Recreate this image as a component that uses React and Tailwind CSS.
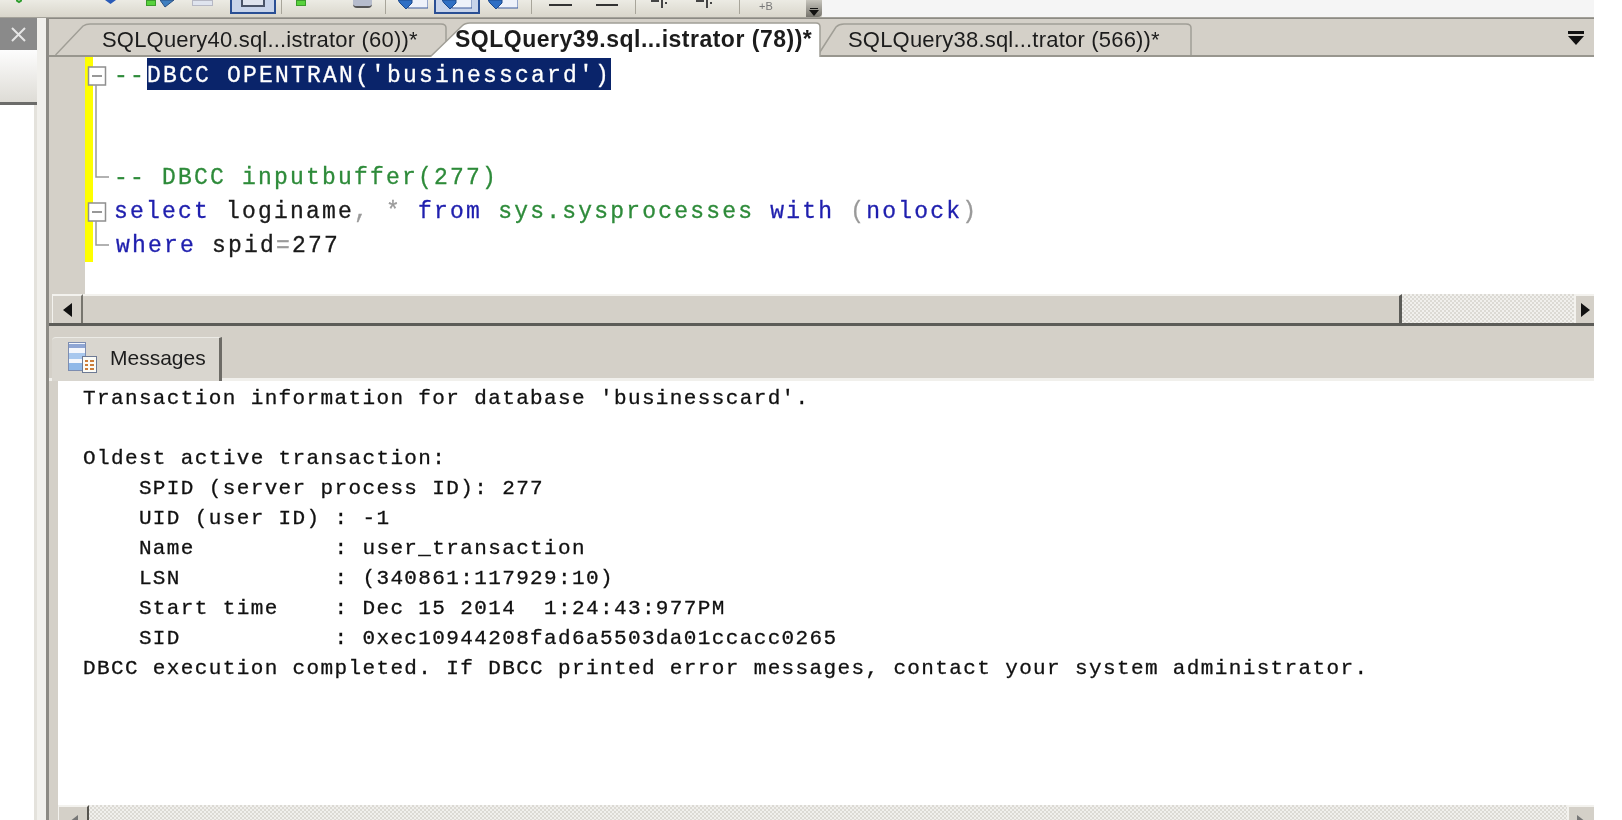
function Sep({ className }) {
  return <div className={"h-[14px] w-px bg-[#a8a59a] " + className} />;
}

function BlueArrow({ className }) {
  return (
    <svg className={className} width="30" height="14" viewBox="0 0 30 14">
      <rect x="10" y="-2" width="20" height="10" fill="#eef2fa" stroke="#3a5a9c" />
      <path d="M0 0 H14 V3 L8 9 L2 3 Z" fill="#2f6fc4" stroke="#1d4a8c" />
    </svg>
  );
}

function Tiny({ className }) {
  return (
    <svg className={className} width="17" height="10" viewBox="0 0 17 10">
      <path d="M0 1 H8 M11 0 V8 M14 3 H16" stroke="#444" strokeWidth="2" fill="none" />
    </svg>
  );
}

function Toolbar() {
  return (
    <div className="flex h-[17px] overflow-hidden">
      <div className="flex w-[822px] shrink-0 items-start bg-gradient-to-b from-[#ecebe4] to-[#d9d6cb] pl-[16px]">
        <svg width="6" height="4" viewBox="0 0 6 4">
          <path d="M0 0 L3 2 L6 0" stroke="#2f9e2f" strokeWidth="2" fill="none" />
        </svg>
        <svg className="ml-[83px]" width="11" height="5" viewBox="0 0 11 5">
          <path d="M0 0 H11 L5.5 4 Z" fill="#2a5bb8" />
        </svg>
        <div className="ml-[30px] h-[6px] w-[10px] border border-[#3c9a2c] bg-[#58d23c]" />
        <svg className="ml-[4px]" width="15" height="8" viewBox="0 0 15 8">
          <path d="M0 0 L5 7 L14 0 Z" fill="#3f7fc0" stroke="#2b4f80" />
        </svg>
        <div className="ml-[17px] h-[6px] w-[21px] border border-[#b6b8c4] bg-[#dfe4ee]" />
        <div className="ml-[17px] flex h-[14px] w-[46px] items-start justify-center border-2 border-t-0 border-[#2a4f94] bg-[#c8d4ea]">
          <div className="h-[7px] w-[24px] border-2 border-t-0 border-[#4a5468] bg-[#dfe4ee]" />
        </div>
        <Sep className="ml-[5px]" />
        <div className="ml-[14px] h-[6px] w-[10px] border border-[#3c9a2c] bg-[#58d23c]" />
        <div className="ml-[47px] h-[8px] w-[19px] rounded-b-sm border-b-2 border-[#555] bg-[#b6bccc]" />
        <Sep className="ml-[13px]" />
        <BlueArrow className="ml-[12px]" />
        <div className="ml-[6px] flex h-[14px] w-[46px] items-start justify-center border-2 border-t-0 border-[#2a4f94] bg-[#c8d4ea]">
          <BlueArrow />
        </div>
        <BlueArrow className="ml-[8px]" />
        <Sep className="ml-[13px]" />
        <div className="ml-[17px] mt-[4px] h-[2px] w-[23px] bg-[#333]" />
        <div className="ml-[24px] mt-[4px] h-[2px] w-[22px] bg-[#333]" />
        <Sep className="ml-[17px]" />
        <Tiny className="ml-[15px]" />
        <Tiny className="ml-[28px]" />
        <Sep className="ml-[26px]" />
        <span className="ml-[19px] font-['Liberation_Sans',sans-serif] text-[11px] leading-[12px] text-[#777]">+B</span>
        <div className="ml-auto flex h-full w-[16px] flex-col items-center justify-end rounded-br-sm bg-gradient-to-b from-[#c8c6be] to-[#77756e] pb-[1px]">
          <div className="mb-[1px] h-px w-[8px] bg-[#111]" />
          <svg width="10" height="6" viewBox="0 0 10 6">
            <path d="M0 0 H10 L5 6 Z" fill="#111" />
          </svg>
        </div>
      </div>
      <div className="h-full w-[772px] bg-[#f5f5f5]" />
    </div>
  );
}

function Sidebar() {
  return (
    <div className="flex w-[46px] shrink-0">
      <div className="flex w-[37px] flex-col">
        <div className="flex h-[32px] items-center justify-center bg-[#8a8a8a]">
          <svg width="17" height="17" viewBox="0 0 17 17">
            <path d="M2 2 L15 15 M15 2 L2 15" stroke="#e6e6e6" strokeWidth="2" />
          </svg>
        </div>
        <div className="h-[55px] border-b-[3px] border-[#6c6c6a] bg-gradient-to-b from-[#fdfdfd] to-[#dedcd6]" />
        <div className="flex-1 border-r-[3px] border-[#e4e2dc] bg-white" />
      </div>
      <div className="flex-1 bg-[#f1f0ec]" />
    </div>
  );
}

function Tab({ width, path, fill, stroke, textClass, label, className }) {
  return (
    <div className={"relative shrink-0 " + className} style={{ width }}>
      <svg className="absolute inset-0" width={width} height="38" viewBox={`0 0 ${width} 38`}>
        <path d={path} fill={fill} stroke={stroke} strokeWidth="1.5" />
      </svg>
      <div className={"relative flex h-[38px] items-center pt-[3px] font-['Liberation_Sans',sans-serif] text-[#1c1c1c] whitespace-nowrap " + textClass}>
        {label}
      </div>
    </div>
  );
}

function TabStrip() {
  return (
    <div className="relative flex h-[38px] bg-[#d4d0c8] pl-[6px] shadow-[inset_0_-2px_0_#98968e]">
      <Tab
        width={392}
        path="M0.5 36 L28 7 Q31 5 35 5 H386 Q391 5 391 9 V36"
        fill="#d4d0c8"
        stroke="#a09e96"
        textClass="pl-[47px] text-[22px] tracking-[0.2px]"
        label="SQLQuery40.sql...istrator (60))*"
      />
      <Tab
        width={392}
        className="z-10 -ml-[17px]"
        path="M0 38 L32 7 Q35 4 40 4 H386 Q390 4 390 8 V38"
        fill="#ffffff"
        stroke="#a09e96"
        textClass="pl-[25px] text-[23px] font-bold tracking-[0.5px]"
        label="SQLQuery39.sql...istrator (78))*"
      />
      <Tab
        width={374}
        className="-ml-[4px]"
        path="M0 36 L18 8 Q21 5 26 5 H368 Q373 5 373 9 V36"
        fill="#d4d0c8"
        stroke="#a09e96"
        textClass="pl-[30px] text-[22px] tracking-[0.2px]"
        label="SQLQuery38.sql...trator (566))*"
      />
      <div className="ml-auto mr-[10px] flex flex-col items-center justify-center gap-[2px]">
        <div className="h-[3px] w-[16px] bg-[#111]" />
        <svg width="16" height="9" viewBox="0 0 16 9">
          <path d="M0 0 H16 L8 9 Z" fill="#111" />
        </svg>
      </div>
    </div>
  );
}

function Editor() {
  const kw = "text-[#1f1fae]";
  const cm = "text-[#2e8b3a]";
  const gr = "text-[#9a9a9a]";
  return (
    <div className="flex h-[237px] bg-[#d4d0c8] pl-[3px]">
      <div className="w-[33px] shrink-0" />
      <div className="relative flex flex-1 bg-white">
        <div className="h-[205px] w-[8px] shrink-0 bg-[#ffff00]" />
        <svg className="absolute left-0 top-0" width="30" height="205" viewBox="0 0 30 205">
          <g fill="#ffffff" stroke="#8f8f8f" strokeWidth="1.5">
            <rect x="3.5" y="10" width="17" height="18" />
            <rect x="3.5" y="146" width="17" height="18" />
          </g>
          <path d="M7 19 H17 M7 155 H17" stroke="#777" strokeWidth="1.5" />
          <path d="M11 28 V120 H24 M11 164 V188 H24" stroke="#999" strokeWidth="1.5" fill="none" />
        </svg>
        <pre className="pl-[21px] pt-[2px] font-['Liberation_Mono',monospace] text-[23px] leading-[34px] tracking-[2.2px] text-[#1a1a1a] [-webkit-text-stroke:0.3px]">
          <div><span className={cm}>--</span><span className="ml-px bg-[#0a246a] pb-[1px] pt-[5px] text-white">DBCC OPENTRAN('businesscard')</span></div>
          <div>&nbsp;</div>
          <div>&nbsp;</div>
          <div className={cm}>-- DBCC inputbuffer(277)</div>
          <div>
            <span className={kw}>select</span> loginame<span className={gr}>,</span> <span className={gr}>*</span> <span className={kw}>from</span> <span className={cm}>sys.sysprocesses</span> <span className={kw}>with</span> <span className={gr}>(</span><span className={kw}>nolock</span><span className={gr}>)</span>
          </div>
          <div>
            <span className={"ml-[2px] " + kw}>where</span> spid<span className={gr}>=</span>277
          </div>
        </pre>
      </div>
    </div>
  );
}

function ScrollTop() {
  return (
    <div className="flex h-[32px] border-b-[3px] border-[#5c5c58] bg-[#d4d0c8] pl-[3px]">
      <div className="flex w-[31px] items-center justify-center border-r-2 border-t-2 border-l border-[#f3f2ee] border-r-[#77756e]">
        <svg width="9" height="14" viewBox="0 0 9 14">
          <path d="M9 0 V14 L0 7 Z" fill="#111" />
        </svg>
      </div>
      <div className="flex-1 border-r-[3px] border-t-2 border-[#f3f2ee] border-r-[#5c5c58]" />
      <div className="h-full w-[172px] bg-[repeating-conic-gradient(#dcdad4_0_25%,#f1f0ed_0_50%)] bg-[length:4px_4px]" />
      <div className="flex w-[20px] items-center justify-center border-l-2 border-t-2 border-[#f3f2ee]">
        <svg width="9" height="14" viewBox="0 0 9 14">
          <path d="M0 0 V14 L9 7 Z" fill="#111" />
        </svg>
      </div>
    </div>
  );
}

function MessagesIcon() {
  return (
    <svg className="-mt-[4px]" width="29" height="31" viewBox="0 0 29 31">
      <rect x="0.5" y="0.5" width="17" height="28" fill="#f4f7fc" stroke="#7d8db0" />
      <rect x="1" y="2" width="16" height="4" fill="#8fa6d4" />
      <rect x="1" y="11" width="16" height="6" fill="#a8c8ee" />
      <rect x="1" y="21" width="16" height="7" fill="#8fb8e8" />
      <rect x="14.5" y="14.5" width="14" height="16" fill="#fbfbf6" stroke="#6d7a94" />
      <path d="M17 19 H20 M22 19 H26 M17 23 H20 M22 23 H26 M17 27 H20 M22 27 H26" stroke="#cc7d3a" strokeWidth="2" />
    </svg>
  );
}

function MessagesStrip() {
  return (
    <div className="flex h-[55px] items-end border-b-[3px] border-[#f1f0ec] bg-[#d4d0c8] pl-[3px]">
      <div className="-mb-[3px] flex h-[44px] w-[170px] items-center gap-[13px] rounded-tl-[4px] border-r-[3px] border-t border-[#6d6b66] border-t-[#ecebe6] bg-[#d9d6cf] pl-[16px]">
        <MessagesIcon />
        <span className="-mt-[4px] font-['Liberation_Sans',sans-serif] text-[21px] text-[#1c1c1c]">Messages</span>
      </div>
    </div>
  );
}

const output = `Transaction information for database 'businesscard'.

Oldest active transaction:
    SPID (server process ID): 277
    UID (user ID) : -1
    Name          : user_transaction
    LSN           : (340861:117929:10)
    Start time    : Dec 15 2014  1:24:43:977PM
    SID           : 0xec10944208fad6a5503da01ccacc0265
DBCC execution completed. If DBCC printed error messages, contact your system administrator.`;

function Results() {
  return (
    <div className="flex flex-1 flex-col overflow-hidden bg-[#d4d0c8] pl-[9px]">
      <div className="flex-1 bg-white pl-[25px] pt-[3px]">
        <pre className="font-['Liberation_Mono',monospace] text-[21px] leading-[30px] tracking-[1.37px] text-[#111] [-webkit-text-stroke:0.3px]">{output}</pre>
      </div>
      <div className="flex h-[15px] shrink-0 bg-[repeating-conic-gradient(#dcdad4_0_25%,#f1f0ed_0_50%)] bg-[length:4px_4px]">
        <div className="flex w-[31px] justify-center border-r-2 border-t-2 border-l border-[#f3f2ee] border-r-[#55534e] bg-[#d4d0c8] pt-[8px]">
          <svg width="9" height="7" viewBox="0 0 9 7">
            <path d="M9 0 V7 H0 Z" fill="#777" />
          </svg>
        </div>
        <div className="flex-1" />
        <div className="flex w-[27px] justify-center border-l-2 border-t-2 border-[#f3f2ee] bg-[#d4d0c8] pt-[8px]">
          <svg width="9" height="7" viewBox="0 0 9 7">
            <path d="M0 0 V7 H9 Z" fill="#777" />
          </svg>
        </div>
      </div>
    </div>
  );
}

export default function App() {
  return (
    <div className="flex h-[820px] w-[1622px] flex-col overflow-hidden bg-white blur-[0.5px]">
      <Toolbar />
      <div className="flex w-[1594px] flex-1 overflow-hidden border-t border-[#a3a199]">
        <Sidebar />
        <div className="flex flex-1 flex-col overflow-hidden border-l-[3px] border-t border-[#8c8a84]">
          <TabStrip />
          <Editor />
          <ScrollTop />
          <MessagesStrip />
          <Results />
        </div>
      </div>
    </div>
  );
}
